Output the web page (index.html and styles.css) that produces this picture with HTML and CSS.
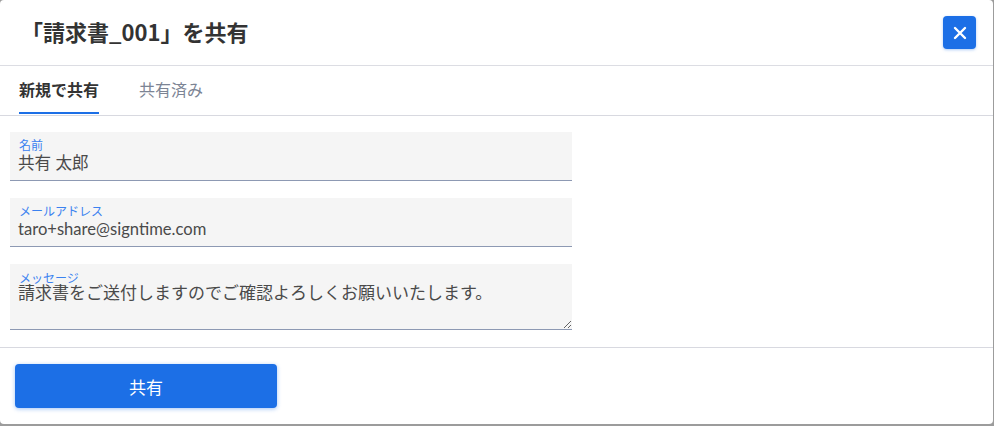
FILE: index.html
```html
<!DOCTYPE html>
<html lang="ja">
<head>
<meta charset="utf-8">
<title>共有</title>
<link rel="stylesheet" href="styles.css">
</head>
<body>
<div class="dialog">
  <header class="dialog-header">
    <h1 class="dialog-title">「請求書_001」を共有</h1>
    <button class="close-btn" aria-label="閉じる">
      <svg width="14" height="14" viewBox="0 0 14 14"><path d="M2 2 L12 12 M12 2 L2 12" stroke="#fff" stroke-width="2.4" stroke-linecap="round"/></svg>
    </button>
  </header>
  <nav class="tabs">
    <div class="tab tab-active">新規で共有</div>
    <div class="tab">共有済み</div>
  </nav>
  <section class="form">
    <div class="field">
      <label class="field-label">名前</label>
      <div class="field-value">共有 太郎</div>
    </div>
    <div class="field">
      <label class="field-label">メールアドレス</label>
      <div class="field-value">taro+share@signtime.com</div>
    </div>
    <div class="field field-area">
      <label class="field-label area-label">メッセージ</label>
      <textarea class="area">請求書をご送付しますのでご確認よろしくお願いいたします。</textarea>
    </div>
  </section>
  <footer class="dialog-footer">
    <button class="share-btn">共有</button>
  </footer>
</div>
</body>
</html>
```
FILE: styles.css
```css
* { box-sizing: border-box; }
html, body { margin: 0; padding: 0; }
body {
  background: #9c9c9c;
  width: 994px;
  height: 426px;
  overflow: hidden;
  font-family: "Noto Sans CJK JP", "Noto Sans", sans-serif;
  color: #444;
}
.dialog {
  width: 993px;
  height: 424px;
  background: #fff;
  border-radius: 4px;
  display: flex;
  flex-direction: column;
}
.dialog-header {
  height: 66px;
  border-bottom: 1px solid #dcdde3;
  display: flex;
  align-items: center;
  justify-content: space-between;
  padding: 0 17px 0 21px;
}
.dialog-title {
  margin: 0 0 4px;
  font-size: 22px;
  line-height: 30px;
  font-weight: 700;
  color: #333;
}
.close-btn {
  width: 33px;
  height: 33px;
  border: none;
  border-radius: 4px;
  background: #1c6fe6;
  display: flex;
  align-items: center;
  justify-content: center;
  padding: 0;
  box-shadow: 0 1px 3px rgba(28,111,230,0.35);
}
.tabs {
  height: 50px;
  border-bottom: 1px solid #d8d9e0;
  display: flex;
  gap: 40px;
  padding-left: 19px;
}
.tab {
  display: flex;
  align-items: center;
  font-size: 16px;
  color: #7c8494;
  border-bottom: 2px solid transparent;
  margin-bottom: 1px;
}
.tab-active {
  color: #333;
  font-weight: 700;
  border-bottom-color: #1c6fe6;
  width: 80px;
}
.form {
  display: flex;
  flex-direction: column;
  gap: 17px;
  padding: 16px 10px 17px;
  border-bottom: 1px solid #d8d9e0;
}
.field {
  width: 562px;
  height: 49px;
  background: #f5f5f5;
  border-bottom: 1px solid #8d99b3;
  padding: 5px 8px 0;
  position: relative;
}
.field-label {
  display: block;
  font-size: 12px;
  line-height: 16px;
  color: #3b82f0;
  padding-left: 1px;
}
.field-value {
  font-family: Lato, "Noto Sans CJK JP", sans-serif;
  font-size: 16.6px;
  line-height: 22px;
  margin-top: -1px;
  color: #4a4a4a;
}
.field-area {
  height: 66px;
  padding: 0;
}
.area-label {
  position: absolute;
  left: 9px;
  top: 6px;
  padding-left: 0;
}
.area {
  display: block;
  width: 100%;
  height: 65px;
  margin: 0;
  border: none;
  background: transparent;
  padding: 18px 8px 0;
  font-family: Lato, "Noto Sans CJK JP", sans-serif;
  font-size: 17px;
  line-height: 22px;
  color: #4a4a4a;
  outline: none;
}
.dialog-footer {
  flex: 1;
  padding: 16px 15px;
}
.share-btn {
  width: 262px;
  height: 44px;
  border: none;
  border-radius: 4px;
  background: #1c6fe6;
  color: #fff;
  font-family: "Noto Sans CJK JP", "Noto Sans", sans-serif;
  font-size: 17px;
  box-shadow: 0 1px 4px rgba(28,111,230,0.4);
}
```
